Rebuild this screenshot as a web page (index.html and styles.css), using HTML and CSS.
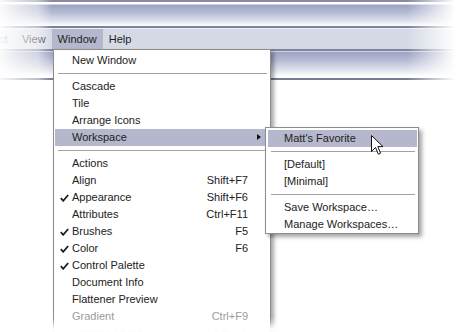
FILE: index.html
```html
<!DOCTYPE html>
<html lang="en">
<head>
    <meta charset="UTF-8">
    <title>Window menu</title>
    <link rel="stylesheet" href="styles.css">
</head>
<body>
    <div class="screen">
        <div class="titlebar"></div>
        <div class="menubar">
            <span class="menubar-item first">Effect</span>
            <span class="menubar-item">View</span>
            <span class="menubar-item active">Window</span>
            <span class="menubar-item">Help</span>
        </div>
        <div class="toolbar"></div>

        <div class="fade fade-left"></div>
        <div class="fade fade-right"></div>

        <div class="menu main-menu">
            <div class="item"><span class="label">New Window</span></div>
            <div class="sep"></div>
            <div class="item"><span class="label">Cascade</span></div>
            <div class="item"><span class="label">Tile</span></div>
            <div class="item"><span class="label">Arrange Icons</span></div>
            <div class="item hover"><span class="label">Workspace</span><span class="arrow"></span></div>
            <div class="sep"></div>
            <div class="item"><span class="label">Actions</span></div>
            <div class="item"><span class="label">Align</span><span class="key">Shift+F7</span></div>
            <div class="item checked"><span class="check"><svg width="9" height="8" viewBox="0 0 9 8"><path d="M0.8 4.2 L3.2 6.8 L8.2 1" /></svg></span><span class="label">Appearance</span><span class="key">Shift+F6</span></div>
            <div class="item"><span class="label">Attributes</span><span class="key">Ctrl+F11</span></div>
            <div class="item checked"><span class="check"><svg width="9" height="8" viewBox="0 0 9 8"><path d="M0.8 4.2 L3.2 6.8 L8.2 1" /></svg></span><span class="label">Brushes</span><span class="key">F5</span></div>
            <div class="item checked"><span class="check"><svg width="9" height="8" viewBox="0 0 9 8"><path d="M0.8 4.2 L3.2 6.8 L8.2 1" /></svg></span><span class="label">Color</span><span class="key">F6</span></div>
            <div class="item checked"><span class="check"><svg width="9" height="8" viewBox="0 0 9 8"><path d="M0.8 4.2 L3.2 6.8 L8.2 1" /></svg></span><span class="label">Control Palette</span></div>
            <div class="item"><span class="label">Document Info</span></div>
            <div class="item"><span class="label">Flattener Preview</span></div>
            <div class="item disabled"><span class="label">Gradient</span><span class="key">Ctrl+F9</span></div>
            <div class="item disabled"><span class="label">Graphic Styles</span><span class="key">Shift+F5</span></div>
        </div>

        <div class="menu sub-menu">
            <div class="item hover"><span class="label">Matt's Favorite</span></div>
            <div class="sep"></div>
            <div class="item"><span class="label">[Default]</span></div>
            <div class="item"><span class="label">[Minimal]</span></div>
            <div class="sep"></div>
            <div class="item"><span class="label">Save Workspace…</span></div>
            <div class="item"><span class="label">Manage Workspaces…</span></div>
        </div>

        <svg class="cursor" width="14" height="22" viewBox="0 0 14 22">
            <path d="M0.5 0.5 L0.5 16.5 L4.5 12.5 L7.3 19.2 L9.6 18.2 L6.8 11.6 L12 11.6 Z" fill="#fff" stroke="#111" stroke-width="1" stroke-linejoin="miter"/>
        </svg>

        <div class="fade fade-bottom"></div>
    </div>
</body>
</html>
```

FILE: styles.css
```css
body {
    margin: 0;
    background: #fff;
    font-family: "Liberation Sans", Arial, sans-serif;
    font-size: 11px;
    color: #222;
}
.screen {
    position: relative;
    width: 463px;
    height: 332px;
    overflow: hidden;
    background: #fff;
}

/* application chrome */
.titlebar {
    height: 28px;
    box-sizing: border-box;
    border-top: 2px solid #878aa2;
    border-bottom: 2px solid #7c8098;
    background: linear-gradient(#fff 0, #fff 2px, #9ba2c2 3px, #b3b9d2 10px, #dde0eb 19px, #fff 24px);
}
.menubar {
    display: flex;
    height: 21px;
    box-sizing: border-box;
    border-top: 1px solid #eceef4;
    background: #d4d9e5;
}
.menubar-item {
    padding: 0 6px;
    line-height: 20px;
    color: #1e1e1e;
}
.menubar-item.first {
    margin-left: -26px;
    padding-right: 8px;
}
.menubar-item.active {
    background: #b5b8cc;
}
.toolbar {
    height: 31px;
    box-sizing: border-box;
    border-top: 2px solid #80849c;
    border-bottom: 2px solid #777c95;
    background: linear-gradient(#fff 0, #9ca3c3 1px, #b4bad3 9px, #dfe2ec 19px, #fff 25px);
}

/* vignette over the chrome */
.fade {
    position: absolute;
    pointer-events: none;
}
.fade-left {
    left: 0;
    top: 0;
    width: 56px;
    height: 100%;
    background: linear-gradient(to right, rgba(255,255,255,0.95) 0, rgba(255,255,255,0.75) 16px, rgba(255,255,255,0.5) 38px, rgba(255,255,255,0) 52px);
}
.fade-right {
    right: 0;
    top: 0;
    width: 58px;
    height: 100%;
    background: linear-gradient(to left, #fff 0, #fff 8px, rgba(255,255,255,0) 56px);
}
.fade-bottom {
    left: 0;
    bottom: 0;
    width: 100%;
    height: 14px;
    z-index: 5;
    background: linear-gradient(rgba(255,255,255,0), rgba(255,255,255,0.96) 80%);
}

/* menus */
.menu {
    position: absolute;
    box-sizing: border-box;
    background: #fff;
    border: 1px solid #8c8c8c;
    box-shadow: 3px 3px 4px rgba(0,0,0,0.35);
}
.main-menu {
    left: 53px;
    top: 49px;
    width: 218px;
    padding: 2px 1px;
    z-index: 2;
}
.sub-menu {
    left: 265px;
    top: 127px;
    width: 154px;
    padding: 2px 1px 0 2px;
    z-index: 3;
}
.item {
    display: grid;
    grid-template-columns: 17px 1fr auto 21px;
    height: 17px;
    line-height: 17px;
    white-space: nowrap;
}
.sub-menu .item {
    grid-template-columns: 16px 1fr auto 8px;
}
.item .check { grid-column: 1; grid-row: 1; display: flex; align-items: center; justify-content: center; padding-left: 1px; }
.item .label { grid-column: 2; grid-row: 1; }
.item .key { grid-column: 3; grid-row: 1; text-align: right; }
.item .arrow { grid-column: 4; grid-row: 1; }
.item.hover {
    background: #b5b7cc;
}
.item.disabled {
    color: #9a9a9a;
}
.check svg path {
    fill: none;
    stroke: #1e1e1e;
    stroke-width: 1.8;
}
.arrow {
    width: 0;
    height: 0;
    margin: 5px 0 0 9px;
    border-top: 3.5px solid transparent;
    border-bottom: 3.5px solid transparent;
    border-left: 4px solid #111;
}
.sep {
    height: 9px;
    position: relative;
}
.sep::after {
    content: "";
    position: absolute;
    left: 3px;
    right: 2px;
    top: 4px;
    border-top: 1px solid #a2a2a2;
}

.cursor {
    position: absolute;
    left: 371px;
    top: 135px;
    z-index: 4;
}
```
